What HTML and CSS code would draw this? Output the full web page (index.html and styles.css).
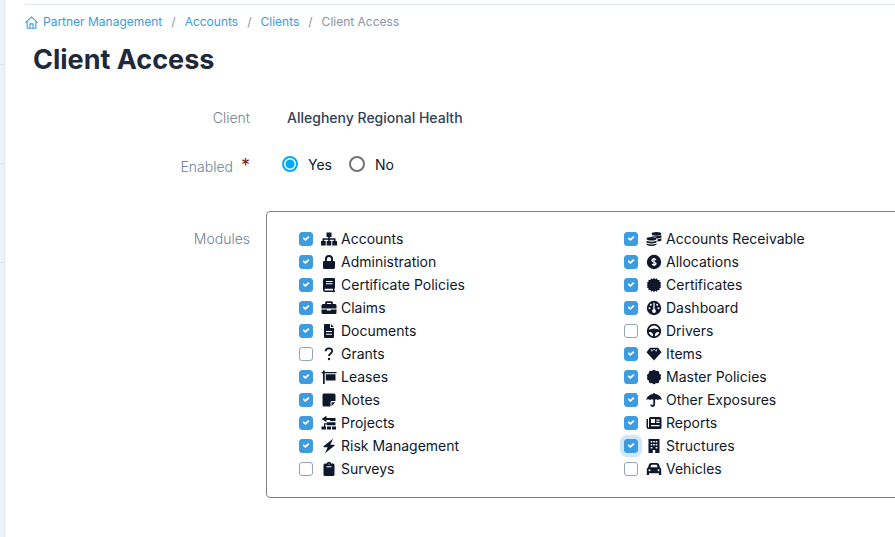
FILE: index.html
```html
<!DOCTYPE html>
<html lang="en">
<head>
<meta charset="utf-8">
<title>Client Access</title>
<link rel="stylesheet" href="styles.css">
</head>
<body>
<div class="shell">
  <div class="rail"></div>
  <main class="page">
    <nav class="crumbs" aria-label="Breadcrumb">
      <a href="#"><svg class="home" viewBox="0 0 12 12"><path d="M.5 6.100 6 .9l5.500 5.200M2 5v6.300h8V5M4.600 11V7.300h2.800V11"/></svg>Partner Management</a>
      <span class="sep">/</span><a href="#">Accounts</a>
      <span class="sep">/</span><a href="#">Clients</a>
      <span class="sep">/</span><span>Client Access</span>
    </nav>
    <h1>Client Access</h1>
    <form>
      <div class="row">
        <span class="label">Client</span>
        <span class="client">Allegheny Regional Health</span>
      </div>
      <div class="row enabled">
        <span class="label" id="enabled-label">Enabled <b class="required">*</b></span>
        <div class="radios" role="radiogroup" aria-labelledby="enabled-label">
          <label><input type="radio" name="enabled" checked>Yes</label>
          <label><input type="radio" name="enabled">No</label>
        </div>
      </div>
      <div class="row modules">
        <span class="label" id="modules-label">Modules</span>
        <fieldset aria-labelledby="modules-label">
          <div class="column">
            <label><input type="checkbox" checked><svg viewBox="0 0 16 16"><path d="M5.500 1.500h5v4.500H8.800v1.300H14.500V10H16v4.500h-4.700V10h1.500V8.800h-4V10h1.500v4.500H5.700V10h1.500V8.800h-4V10h1.500v4.500H0V10h1.500V7.300h5.700V6H5.500z"/></svg>Accounts</label>
            <label><input type="checkbox" checked><svg viewBox="0 0 16 16"><path fill-rule="evenodd" d="M4 7V5a4 4 0 0 1 8 0v2h1a1 1 0 0 1 1 1v5.500a1.500 1.500 0 0 1-1.500 1.500h-9A1.500 1.500 0 0 1 2 13.500V8a1 1 0 0 1 1-1zm2 0h4V5a2 2 0 0 0-4 0z"/></svg>Administration</label>
            <label><input type="checkbox" checked><svg viewBox="0 0 16 16"><path fill-rule="evenodd" d="M4 1h9a1 1 0 0 1 1 1v9l-.6 1v1.500h.6V15H4a2.200 2.200 0 0 1-2-2V3a2 2 0 0 1 2-2zm1 3v1h6.500V4zm0 2.300v1h6.500v-1zM4.300 11.800a.8.8 0 0 0 0 1.600H12v-1.600z"/></svg>Certificate Policies</label>
            <label><input type="checkbox" checked><svg viewBox="0 0 16 16"><path fill-rule="evenodd" d="M4.200 4V2.500q0-1.300 1.300-1.300h5q1.300 0 1.300 1.300V4h2.500A1.500 1.500 0 0 1 15.500 5.500v3H.5v-3A1.500 1.500 0 0 1 2 4zM6 4h4V3H6zM.5 9.500H6v1h4v-1h5.500v3A1.500 1.500 0 0 1 14 14H2a1.500 1.500 0 0 1-1.500-1.500z"/></svg>Claims</label>
            <label><input type="checkbox" checked><svg viewBox="0 0 16 16"><path fill-rule="evenodd" d="M4 1h5v4h4v9a1 1 0 0 1-1 1H4a1 1 0 0 1-1-1V2a1 1 0 0 1 1-1zm6 0 3 3h-3zM5 8v1h6V8zm0 2.700v1h6v-1z"/></svg>Documents</label>
            <label><input type="checkbox"><svg viewBox="0 0 16 16"><path class="line" d="M4.600 5.200C4.800 1.500 11.200 1.500 11.200 5.100 11.200 7.500 8 7.400 8 10"/><circle cx="8" cy="13" r="1.200"/></svg>Grants</label>
            <label><input type="checkbox" checked><svg viewBox="0 0 16 16"><path d="M2 1.500h1.700V3H15.500v1.300H3.700V15H2V4.300H.5V3H2zM4.800 5.200h9.700v6.300H4.800z"/></svg>Leases</label>
            <label><input type="checkbox" checked><svg viewBox="0 0 16 16"><path d="M3 1.500h10a1.500 1.500 0 0 1 1.500 1.500v6H11a1.500 1.500 0 0 0-1.500 1.500v4H3A1.500 1.500 0 0 1 1.500 13V3A1.500 1.500 0 0 1 3 1.500zM11 10.200h3.300l-3.800 4v-3.500z"/></svg>Notes</label>
            <label><input type="checkbox" checked><svg viewBox="0 0 16 16"><path d="M.5 4 5.500.8V3h4.500v2H5.500v2.200zM9 3h5.500v3H9zM6 7.200h8.500v3H6zM3.500 8.200H7v1.200H3.500zM.5 11.500H5v3H.5zM6 11.500h4v3H6zM11 11.500h4v3h-4zM3 8.200h1.200V12H3z"/></svg>Projects</label>
            <label><input type="checkbox" checked><svg viewBox="0 0 16 16"><path d="M12 .8 2.500 8.300q-.6 1 .5 1h3.700L4 15.200 13.500 7.700Q14 6.700 13 6.700H9.300z"/></svg>Risk Management</label>
            <label><input type="checkbox"><svg viewBox="0 0 16 16"><path fill-rule="evenodd" d="M4 2.500h1.700a2.400 2.400 0 0 1 4.600 0H12A1.500 1.500 0 0 1 13.500 4v9.500A1.500 1.500 0 0 1 12 15H4a1.500 1.500 0 0 1-1.500-1.500V4A1.500 1.500 0 0 1 4 2.500zm1.500 2.700v1h5v-1zM8 2.400a.6.6 0 1 0 0 1.200.6.6 0 0 0 0-1.200z"/></svg>Surveys</label>
          </div>
          <div class="column">
            <label><input type="checkbox" checked><svg viewBox="0 0 16 16"><ellipse cx="10.500" cy="2.800" rx="4.900" ry="1.900"/><path d="M6 4.700q4.500 1.500 9.400-.5v2.200q-2 1-4.200 1Q9 5.700 6 5.500zM11.500 8.200q2 0 3.900-1v2.200q-1.700.9-3.900 1z"/><ellipse cx="5.500" cy="7.800" rx="5" ry="1.800"/><path d="M.5 9.700q5 2 10 0v1.900q-5 2-10 0zM.5 12.500q5 2 10 0v1.200q-5 2.600-10 0z"/></svg>Accounts Receivable</label>
            <label><input type="checkbox" checked><svg viewBox="0 0 16 16"><circle cx="8" cy="8" r="7.200"/><path class="cut" d="M10 5.800C9 4.600 6 4.600 6 6.400S10 7.800 10 9.600 7 11.400 6 10.200M8 4v8"/></svg>Allocations</label>
            <label><input type="checkbox" checked><svg viewBox="0 0 16 16"><path d="m8 .8 1.200 1.500L11 1.200l.6 1.800 2-.1-.1 2 1.800.7-1.100 1.600L15.500 8l-1.300 1 1.100 1.500-1.800.6.100 2-2-.1-.6 1.800-1.800-1.100L8 15.200l-1.200-1.500L5 14.800 4.400 13l-2 .1.100-2-1.800-.6L1.800 9 .5 8l1.300-.8L.7 5.600l1.800-.7-.1-2 2 .1L5 1.200l1.800 1.100z"/></svg>Certificates</label>
            <label><input type="checkbox" checked><svg viewBox="0 0 16 16"><circle cx="8" cy="8" r="7.200"/><path class="cut" d="M8 2.800v7"/><g class="hole"><circle cx="8" cy="11" r="1.900"/><circle cx="4.800" cy="4.700" r="1"/><circle cx="11.200" cy="4.700" r="1"/><circle cx="3.500" cy="8.200" r="1"/><circle cx="12.500" cy="8.200" r="1"/></g></svg>Dashboard</label>
            <label><input type="checkbox"><svg viewBox="0 0 16 16"><circle class="line" cx="8" cy="8" r="6.300"/><path d="M2 7q6-3 12 0v2h-3l-2 2v3H7v-3L5 9H2z"/></svg>Drivers</label>
            <label><input type="checkbox" checked><svg viewBox="0 0 16 16"><path d="M4 1.700h8l3.500 4.600L8 14.500.5 6.300z"/><path class="cut thin" d="m5 3 .8 2.300L8 3l2.200 2.300L11 3"/></svg>Items</label>
            <label><input type="checkbox" checked><svg viewBox="0 0 16 16"><path d="M8 .8q1.200 0 1.900 1.200 3.500-1 3.400 2.700Q16 5.800 14.500 8q1.500 2.200-1.200 3.300.1 3.700-3.400 2.700Q9.200 15.200 8 15.200T6.100 14q-3.500 1-3.400-2.700Q0 10.200 1.500 8 0 5.800 2.700 4.700 2.600 1 6.100 2 6.800.8 8 .8z"/></svg>Master Policies</label>
            <label><input type="checkbox" checked><svg viewBox="0 0 16 16"><path d="M7.200 1h1.600v1C12.200 2 15.300 4.500 15.900 8q-2.200-1.600-4 0Q10 6.600 8.800 7.800H7.200Q6 6.600 4.100 8 2.200 6.400.1 8 .8 4.500 4.200 2.800 5.500 2 7.200 2z"/><path class="line" d="M8.200 7v5.500c0 2-3 2-3 0"/></svg>Other Exposures</label>
            <label><input type="checkbox" checked><svg viewBox="0 0 16 16"><path fill-rule="evenodd" d="M4.500 2H14a1.500 1.500 0 0 1 1.500 1.500v9A1.500 1.500 0 0 1 14 14H2.500a2 2 0 0 1-2-2V4H2v8q0 .5.500.5T3 12V3.500A1.500 1.500 0 0 1 4.500 2zM5 4v4h4V4zm5.300.5v1.200h3.200V4.500zm0 2.300V8h3.200V6.800zM5 10v1.200h8.500V10z"/></svg>Reports</label>
            <label><input type="checkbox" class="focused" checked><svg viewBox="0 0 16 16"><path fill-rule="evenodd" d="M2.500 1h11v14H9.200v-3H6.800v3H2.500zM4.700 3v1.600h1.600V3zm2.500 0v1.600h1.600V3zm2.500 0v1.600h1.600V3zM4.700 6v1.600h1.600V6zm2.500 0v1.600h1.600V6zm2.500 0v1.600h1.600V6zM4.700 9v1.500h1.600V9zm5 0v1.500h1.600V9z"/></svg>Structures</label>
            <label><input type="checkbox"><svg viewBox="0 0 16 16"><path fill-rule="evenodd" d="M5 2h6q1.500 0 2 1.500l1 3q1.200.5 1.200 2V14H13v-1.800H3V14H.8V8.500q0-1.500 1.200-2l1-3Q3.500 2 5 2zm.3 1.800L4.400 6.300h7.200l-.9-2.500zM3.500 8.200a1 1 0 1 0 0 2 1 1 0 0 0 0-2zm9 0a1 1 0 1 0 0 2 1 1 0 0 0 0-2z"/></svg>Vehicles</label>
          </div>
        </fieldset>
      </div>
    </form>
  </main>
</div>
</body>
</html>
```
FILE: styles.css
```css
* { box-sizing: border-box; }

body {
  margin: 0;
  background: #fff;
  color: #0f172a;
  font: 14px/23px Inter, "Liberation Sans", sans-serif;
}

.shell {
  display: flex;
  min-height: 100vh;
  overflow: hidden;
}

.rail {
  flex: 0 0 5px;
  border-right: 1px solid #dfe7ef;
  background:
    linear-gradient(#ebf3fb, #ebf3fb) 0 263px no-repeat,
    repeating-linear-gradient(#ebf3fb 0 98px, #dce5ee 98px 99px) 0 -34px / 100% 990px;
}

.page {
  flex: 1;
  min-width: 0;
  padding: 4px 0 24px 20px;
}

.crumbs {
  display: flex;
  align-items: center;
  gap: 9px;
  padding-top: 8px;
  border-top: 1px solid #e2e8f0;
  color: #8a94a3;
  font-size: 12px;
  line-height: 18px;
}

.crumbs a {
  display: flex;
  align-items: center;
  gap: 5px;
  color: #3d9be0;
  text-decoration: none;
}

.home {
  width: 13px;
  height: 13px;
  fill: none;
  stroke: currentColor;
}

h1 {
  margin: 12px 0 0 8px;
  color: #1e293b;
  font-size: 27px;
  font-weight: 700;
  line-height: 34px;
}

form { margin-top: 29px; }

.row {
  display: grid;
  grid-template-columns: 225px minmax(0, 1fr);
}

.label {
  color: #718096;
  font-weight: 300;
  text-align: right;
}

.client {
  padding-left: 37px;
  color: #334155;
  font-weight: 500;
}

.enabled { margin-top: 26px; }

.required {
  margin-left: 4px;
  color: #7f1d1d;
  font-size: 18px;
  line-height: 18px;
}

.radios {
  display: flex;
  gap: 17px;
  padding-left: 32px;
}

.radios label {
  display: flex;
  align-items: center;
  gap: 10px;
  height: 18px;
}

input {
  flex: none;
  margin: 0;
  appearance: none;
}

input[type="radio"] {
  width: 16px;
  height: 16px;
  border: 2px solid #737373;
  border-radius: 50%;
}

input[type="radio"]:checked {
  border-color: #03a9f4;
  background: radial-gradient(circle, #03a9f4 4px, #fff 5px);
}

.modules { margin-top: 33px; }

.modules .label { padding-top: 16px; }

fieldset {
  display: grid;
  grid-template-columns: 325px 325px;
  min-width: 684px;
  margin: 0 0 0 16px;
  padding: 15px 32px 17px;
  border: 1px solid #808087;
  border-radius: 4px;
}

.column label {
  display: flex;
  align-items: center;
  height: 23px;
}

input[type="checkbox"] {
  display: grid;
  place-items: center;
  width: 14px;
  height: 14px;
  border: 1px solid #94a3b8;
  border-radius: 3px;
}

input[type="checkbox"]:checked {
  border-color: #3d9be0;
  background: #3d9be0;
}

input[type="checkbox"]:checked::before {
  content: "";
  width: 7px;
  height: 5px;
  background: #fff;
  clip-path: polygon(0 50%, 18% 25%, 40% 55%, 82% 0, 100% 25%, 42% 100%);
}

.column .focused { box-shadow: 0 0 0 4px #cfe6f8; }

.column svg {
  flex: none;
  width: 16px;
  height: 16px;
  margin: 0 4px 0 8px;
  fill: #0f172a;
}

.column .line {
  fill: none;
  stroke: #0f172a;
  stroke-width: 1.800;
}

.column .cut {
  fill: none;
  stroke: #fff;
  stroke-width: 1.300;
}

.column .thin { stroke-width: .7; }

.column .hole { fill: #fff; }
```
